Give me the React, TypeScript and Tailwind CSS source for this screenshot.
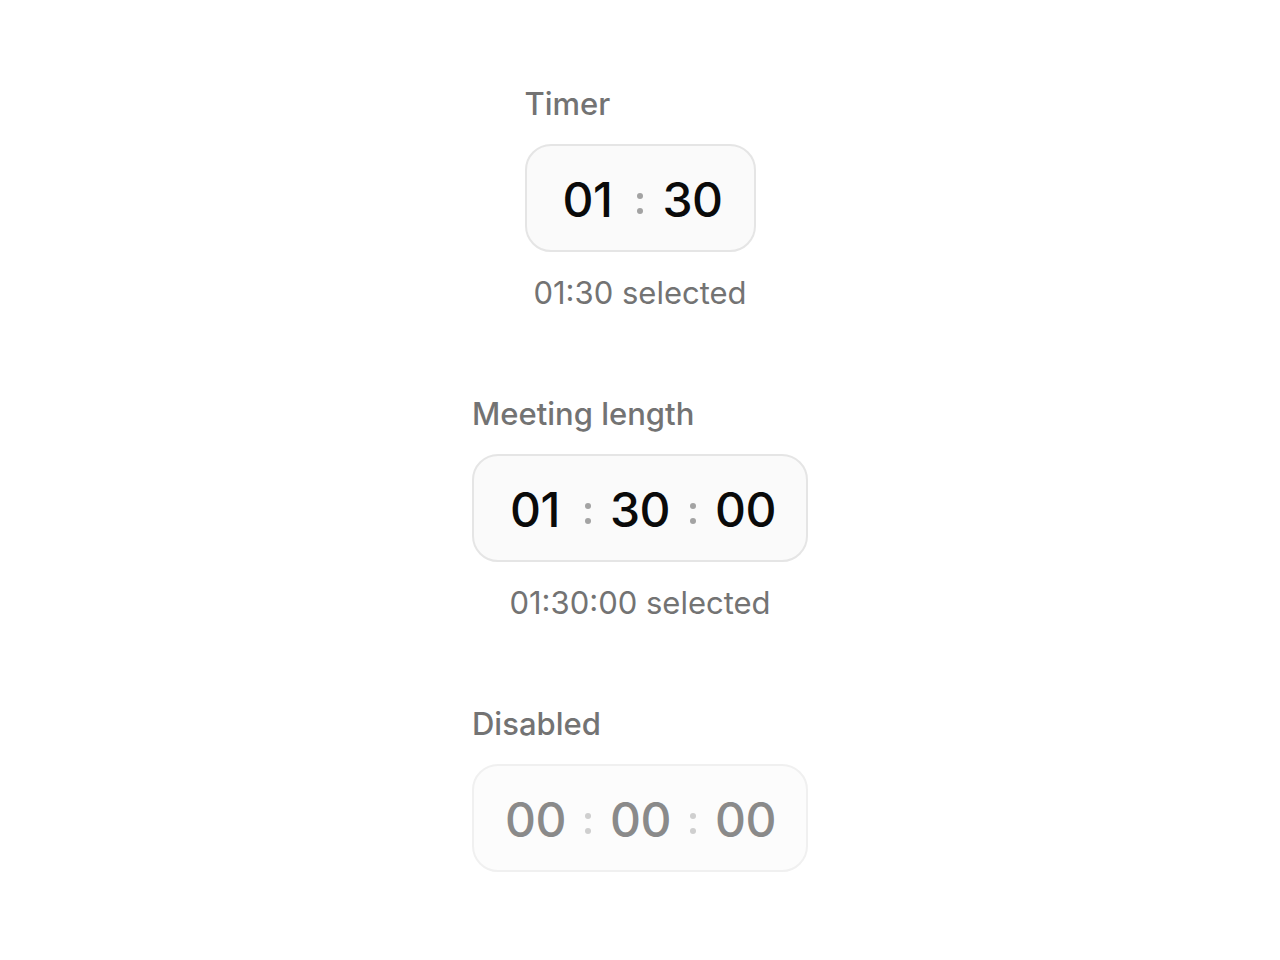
import React from "react";

type Part = string;

function Colon({ disabled }: { disabled?: boolean }) {
  const dot = disabled ? "bg-[#cfcfcf]" : "bg-[#a3a3a3]";
  return (
    <span className="w-[45px] flex flex-col items-center gap-[9px] mt-[11px]">
      <span className={`block w-[6px] h-[6px] rounded-full ${dot}`} />
      <span className={`block w-[6px] h-[6px] rounded-full ${dot}`} />
    </span>
  );
}

function TimeField({ parts, disabled }: { parts: Part[]; disabled?: boolean }) {
  return (
    <div
      className={`flex items-center h-[108px] px-[31px] rounded-[26px] border-2 ${
        disabled ? "border-[#f0f0f0] bg-[#fcfcfc]" : "border-[#e5e5e5] bg-[#fafafa]"
      }`}
    >
      {parts.map((p, i) => (
        <React.Fragment key={i}>
          {i > 0 && <Colon disabled={disabled} />}
          <span
            className={`w-[60px] pt-[4px] text-center text-[48px] leading-none font-medium tracking-[-0.5px] ${
              disabled ? "text-[#8a8a8a]" : "text-[#0a0a0a]"
            }`}
          >
            {p}
          </span>
        </React.Fragment>
      ))}
    </div>
  );
}

function Group({
  label,
  parts,
  caption,
  disabled,
}: {
  label: string;
  parts: Part[];
  caption?: string;
  disabled?: boolean;
}) {
  return (
    <div className="flex flex-col">
      <div className="text-[31px] leading-[36px] font-medium text-[#737373] mb-[22px]">{label}</div>
      <TimeField parts={parts} disabled={disabled} />
      {caption && (
        <div className="self-center mt-[23px] text-[31px] leading-[36px] text-[#737373]">{caption}</div>
      )}
    </div>
  );
}

export default function App() {
  return (
    <div
      className="min-h-screen bg-white flex flex-col items-center pt-[86px] gap-[85px]"
      style={{ fontFamily: "Inter, 'Noto Sans', sans-serif" }}
    >
      <Group label="Timer" parts={["01", "30"]} caption="01:30 selected" />
      <Group label="Meeting length" parts={["01", "30", "00"]} caption="01:30:00 selected" />
      <Group label="Disabled" parts={["00", "00", "00"]} disabled />
    </div>
  );
}
